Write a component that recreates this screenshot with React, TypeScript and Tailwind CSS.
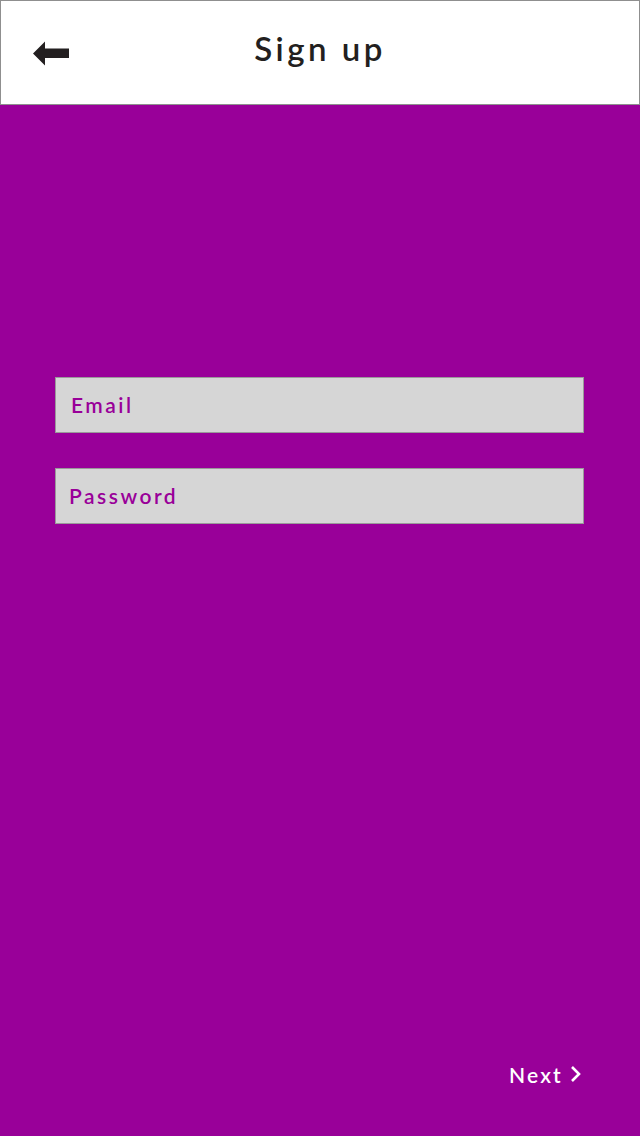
export default function App() {
  return (
    <div
      className="flex h-[1136px] w-[640px] flex-col bg-[#990099]"
      style={{ fontFamily: "Lato, 'Open Sans', sans-serif" }}
    >
      {/* Header */}
      <div className="relative flex h-[105px] items-center justify-center border border-[#8f8f8f] bg-white pb-[8px]">
        <button className="absolute left-[32px] top-[40px]">
          <svg width="37" height="25" viewBox="0 0 37 25">
            <path d="M0 12.5 L12 0.5 L12 7.5 L36 7.5 L36 17 L12 17 L12 24.5 Z" fill="#231f20" />
          </svg>
        </button>
        <h1 className="text-[33px] font-semibold tracking-[3.5px] text-[#231f20]">
          Sign up
        </h1>
      </div>

      {/* Form */}
      <div className="flex flex-col gap-[35px] pl-[55px] pr-[56px] pt-[272px]">
        <div className="flex h-[56px] items-center border border-[#9a9a9a] bg-[#d6d6d6] pl-[15px]">
          <span className="text-[21px] font-semibold tracking-[2.5px] text-[#990099]">Email</span>
        </div>
        <div className="flex h-[56px] items-center border border-[#9a9a9a] bg-[#d6d6d6] pl-[13px]">
          <span className="text-[21px] font-semibold tracking-[2.5px] text-[#990099]">Password</span>
        </div>
      </div>

      {/* Footer */}
      <div className="mt-auto flex justify-end pb-[46px] pr-[59px]">
        <button className="flex items-center gap-[7px] text-[21px] font-semibold tracking-[2.2px] text-white">
          Next
          <svg width="11" height="18" viewBox="0 0 11 18">
            <path d="M2 2 L9 9 L2 16" fill="none" stroke="white" strokeWidth="2.6" />
          </svg>
        </button>
      </div>
    </div>
  );
}
